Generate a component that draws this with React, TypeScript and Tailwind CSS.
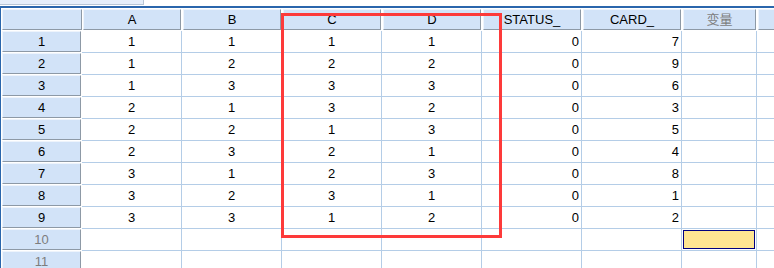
import React from 'react';

const rows = [
  [1, 1, 1, 1, 0, 7],
  [1, 2, 2, 2, 0, 9],
  [1, 3, 3, 3, 0, 6],
  [2, 1, 3, 2, 0, 3],
  [2, 2, 1, 3, 0, 5],
  [2, 3, 2, 1, 0, 4],
  [3, 1, 2, 3, 0, 8],
  [3, 2, 3, 1, 0, 1],
  [3, 3, 1, 2, 0, 2],
];

const headBox =
  'h-full flex items-center justify-center border-t border-l border-t-[#eef4fc] border-l-[#eef4fc] border-r border-b border-r-[#8d99a6] border-b-[#8d99a6] bg-[#d2e3f8]';

function HeadCell({ w, label, muted }: { w: string; label?: string; muted?: boolean }) {
  return (
    <div className={`${w} h-full shrink-0 pl-px pr-px pt-px pb-px`}>
      <div className={`${headBox} ${muted ? 'text-[#7d7d7d]' : 'text-black'}`}>{label}</div>
    </div>
  );
}

function RowHead({ n }: { n: number }) {
  return (
    <div className="w-[81px] h-full shrink-0 pl-px pr-px pb-px">
      <div className={`${headBox} ${n > 9 ? 'text-[#7d7d7d]' : 'text-black'}`}>{n}</div>
    </div>
  );
}

function Cell({ w, value, align }: { w: string; value?: number; align?: 'c' | 'r' }) {
  return (
    <div
      className={`${w} h-full shrink-0 border-r border-b border-[#b4cde7] flex items-center ${
        align === 'r' ? 'justify-end pr-[2px]' : 'justify-center'
      }`}
    >
      {value}
    </div>
  );
}

export default function App() {
  const data = [...rows, null, null];

  return (
    <div className="relative w-[774px] h-[268px] overflow-hidden bg-white text-[13px] leading-none text-black font-['Liberation_Sans','Arial','Noto_Sans_CJK_SC',sans-serif]">
      {/* top strip */}
      <div className="flex h-[5px]">
        <div className="w-[144px] bg-[#e5eefa] border-r border-b border-[#b8c6d6]" />
      </div>
      <div className="h-px" />
      <div className="h-[2px] bg-[#2a66ac]" />

      <div className="border-l border-[#2a66ac]">
        {/* column headers */}
        <div className="flex h-[23px]">
          <div className="w-[81px] h-full shrink-0 pl-px pt-px pb-px">
            <div className={headBox} />
          </div>
          <HeadCell w="w-[100px]" label="A" />
          <HeadCell w="w-[100px]" label="B" />
          <HeadCell w="w-[100px]" label="C" />
          <HeadCell w="w-[100px]" label="D" />
          <HeadCell w="w-[100px]" label="STATUS_" />
          <HeadCell w="w-[100px]" label="CARD_" />
          <HeadCell w="w-[75px]" label="变量" muted />
          <HeadCell w="w-[40px]" />
        </div>

        {data.map((r, i) => (
          <div key={i} className="flex h-[22px]">
            <RowHead n={i + 1} />
            <Cell w="w-[100px]" value={r?.[0]} />
            <Cell w="w-[100px]" value={r?.[1]} />
            <Cell w="w-[100px]" value={r?.[2]} />
            <Cell w="w-[100px]" value={r?.[3]} />
            <Cell w="w-[100px]" value={r?.[4]} align="r" />
            <Cell w="w-[100px]" value={r?.[5]} align="r" />
            <div className="w-[75px] h-full shrink-0 border-r border-b border-[#b4cde7] p-px">
              {i === 9 && <div className="h-full border border-[#00007f] bg-[#fee592]" />}
            </div>
            <div className="w-[40px] h-full shrink-0 border-b border-[#b4cde7]" />
          </div>
        ))}
      </div>

      {/* highlight box */}
      <div className="absolute left-[281px] top-[13px] w-[221px] h-[225px] border-[3px] border-[#fd3a3a]" />
    </div>
  );
}
